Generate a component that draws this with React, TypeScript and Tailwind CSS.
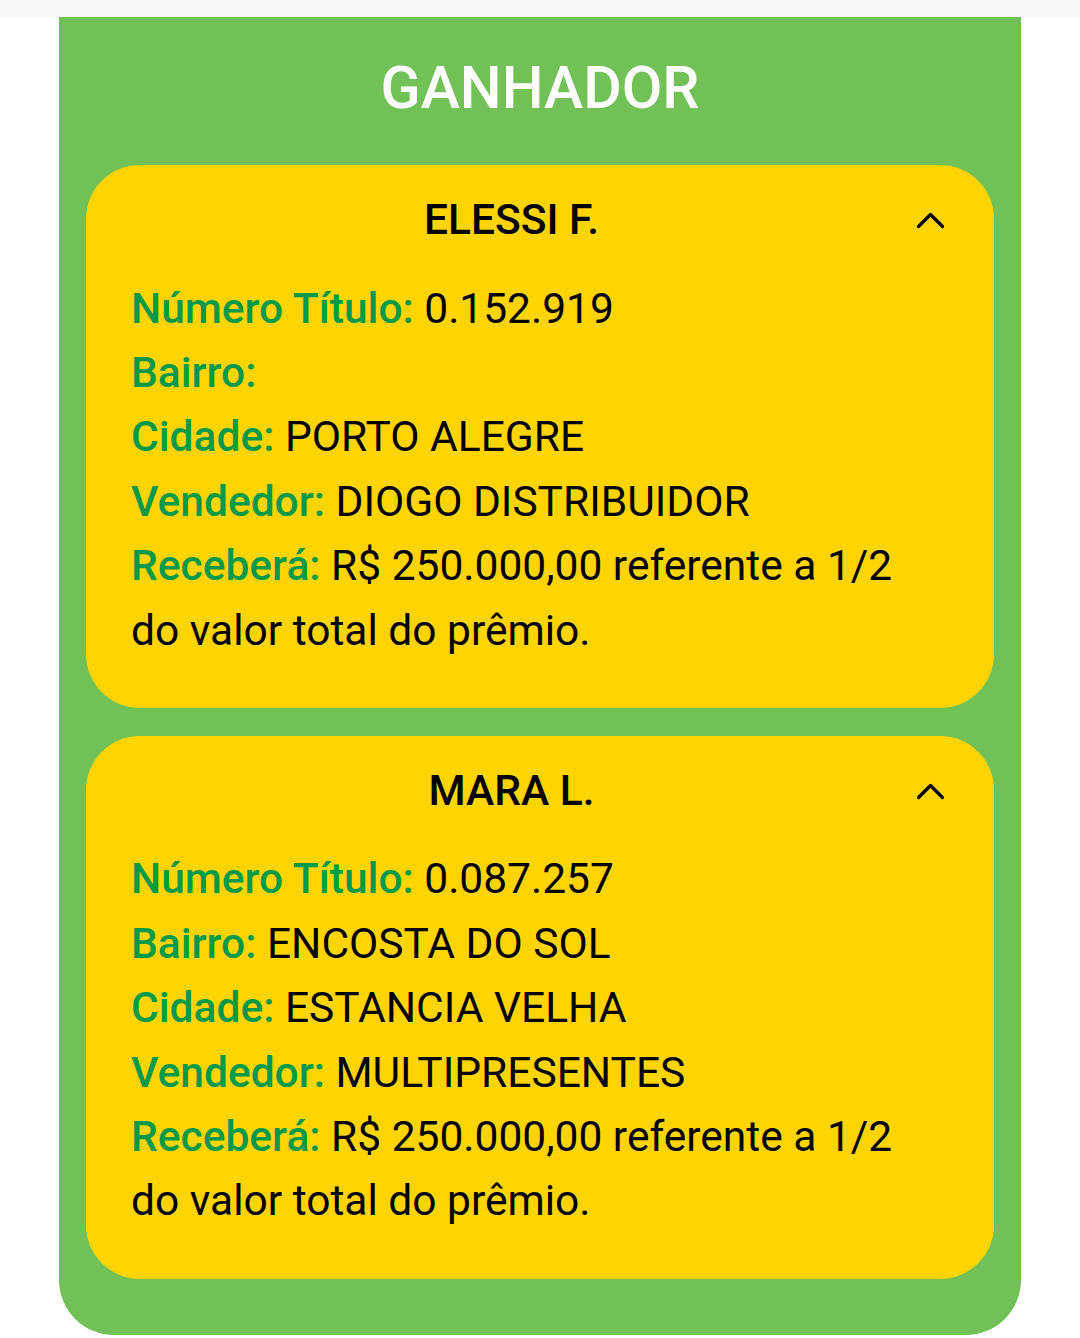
type Winner = {
  nome: string;
  titulo: string;
  bairro: string;
  cidade: string;
  vendedor: string;
  valor: string;
};

const winners: Winner[] = [
  {
    nome: "ELESSI F.",
    titulo: "0.152.919",
    bairro: "",
    cidade: "PORTO ALEGRE",
    vendedor: "DIOGO DISTRIBUIDOR",
    valor: "R$ 250.000,00 referente a 1/2 do valor total do prêmio.",
  },
  {
    nome: "MARA L.",
    titulo: "0.087.257",
    bairro: "ENCOSTA DO SOL",
    cidade: "ESTANCIA VELHA",
    vendedor: "MULTIPRESENTES",
    valor: "R$ 250.000,00 referente a 1/2 do valor total do prêmio.",
  },
];

const ChevronUp = () => (
  <svg width="30" height="18" viewBox="0 0 30 18" fill="none">
    <polyline
      points="2.5,15.5 14.5,3.5 26.5,15.5"
      stroke="#000"
      strokeWidth="3.2"
      strokeLinecap="round"
      strokeLinejoin="round"
    />
  </svg>
);

const Row = ({ label, value }: { label: string; value: string }) => (
  <p>
    <span className="font-medium text-[#009a4a]">{label}:</span>
    {value ? ` ${value}` : ""}
  </p>
);

const WinnerCard = ({ w }: { w: Winner }) => (
  <div className="rounded-[54px] bg-[#ffd400] pl-[45px] pr-[46px] pt-[34px] pb-[45px]">
    <div className="flex items-center">
      <h3 className="flex-1 text-center text-[42.5px] font-medium leading-[42.5px] text-black">
        {w.nome}
      </h3>
      <div className="flex w-[56px] justify-end pr-[2px]">
        <ChevronUp />
      </div>
    </div>
    <div className="mt-[35px] text-[42.5px] leading-[64.4px] text-black">
      <Row label="Número Título" value={w.titulo} />
      <Row label="Bairro" value={w.bairro} />
      <Row label="Cidade" value={w.cidade} />
      <Row label="Vendedor" value={w.vendedor} />
      <Row label="Receberá" value={w.valor} />
    </div>
  </div>
);

export default function App() {
  return (
    <div className="min-h-[1338px] bg-white font-['Roboto',sans-serif]">
      <div className="h-[17px] bg-[#f7f7f7]" />
      <div className="mx-[59px] rounded-b-[55px] bg-[#71c156] px-[27px] pt-[41px] pb-[56px]">
        <h2 className="mb-[48px] text-center text-[59px] font-medium leading-[59px] text-white">
          GANHADOR
        </h2>
        <div className="flex flex-col gap-[28px]">
          {winners.map((w) => (
            <WinnerCard key={w.nome} w={w} />
          ))}
        </div>
      </div>
    </div>
  );
}
